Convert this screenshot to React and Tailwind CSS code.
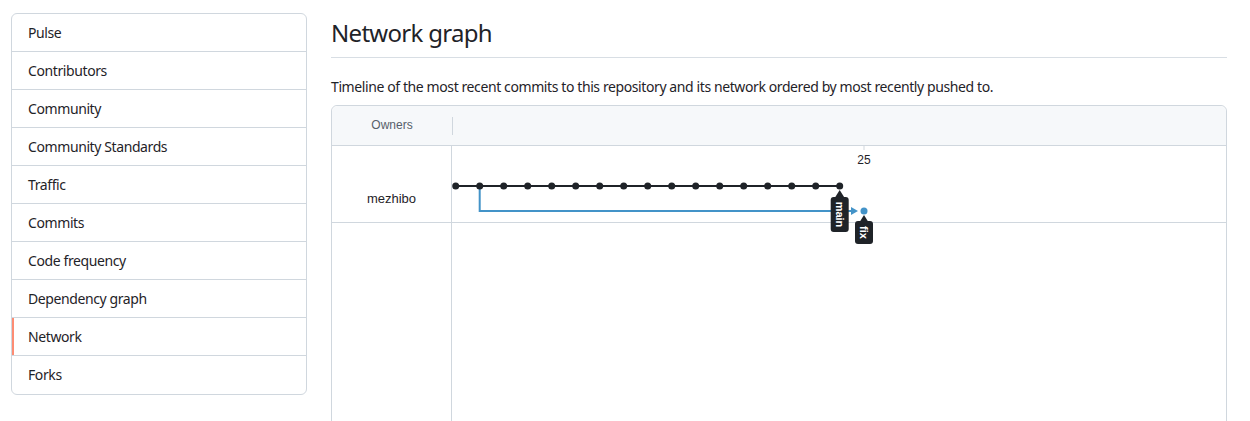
import React from 'react';

const menu = [
  'Pulse',
  'Contributors',
  'Community',
  'Community Standards',
  'Traffic',
  'Commits',
  'Code frequency',
  'Dependency graph',
  'Network',
  'Forks',
];

const font = { fontFamily: '"Noto Sans", "Liberation Sans", sans-serif' };
const canvasFont = { fontFamily: '"Liberation Sans", Arial, sans-serif' };

// the timeline drawing, coordinates relative to the graph cell
const Graph = () => {
  const dots = Array.from({ length: 17 }, (_, i) => 3.7 + i * 24);
  const last = dots[dots.length - 1];
  return (
    <svg className="absolute left-0 top-0 overflow-visible" width="400" height="120" style={canvasFont}>
      <line x1="412" y1="-1" x2="412" y2="4" stroke="#d0d7de" />
      <text x="412" y="18" fontSize="12" textAnchor="middle" fill="#1f2328">25</text>

      <path d="M27.7 40 V65 H404" fill="none" stroke="#4393c8" strokeWidth="2" />
      <path d="M399 61 L406 65 L399 69 Z" fill="#4393c8" />
      <circle cx="412" cy="65" r="3.5" fill="#4393c8" />

      <line x1={dots[0]} y1="40" x2={last} y2="40" stroke="#1f2328" strokeWidth="2" />
      {dots.map((x) => (
        <circle key={x} cx={x} cy="40" r="3.5" fill="#1f2328" />
      ))}

      <g>
        <path d={`M${last - 5} 52 L${last} 44 L${last + 5} 52 Z`} fill="#1f2328" />
        <rect x={last - 9} y="51" width="18" height="35" rx="3" fill="#1f2328" />
        <text
          x={last}
          y="68.5"
          fontSize="11"
          fontWeight="bold"
          fill="#fff"
          textAnchor="middle"
          dominantBaseline="central"
          transform={`rotate(90 ${last} 68.5)`}
        >
          main
        </text>
      </g>
      <g>
        <path d="M407 77 L412 69 L417 77 Z" fill="#1f2328" />
        <rect x="403" y="75" width="18" height="23" rx="3" fill="#1f2328" />
        <text
          x="412"
          y="86.5"
          fontSize="11"
          fontWeight="bold"
          fill="#fff"
          textAnchor="middle"
          dominantBaseline="central"
          transform="rotate(90 412 86.5)"
        >
          fix
        </text>
      </g>
    </svg>
  );
};

export default function App() {
  return (
    <div className="flex gap-6 pl-[11px] pt-[13px] bg-white text-[#1f2328] min-h-[421px]" style={font}>
      {/* side nav */}
      <nav className="w-[296px] shrink-0 self-start border border-[#d0d7de] rounded-md overflow-hidden">
        {menu.map((item, i) => (
          <div
            key={item}
            className={
              'relative h-[38px] flex items-center pl-4 text-sm tracking-[-0.4px] ' +
              (i < menu.length - 1 ? 'border-b border-[#d0d7de]' : '')
            }
          >
            {item === 'Network' && <span className="absolute left-0 top-0 bottom-0 w-[2px] bg-[#fd8c73]" />}
            {item}
          </div>
        ))}
      </nav>

      {/* main */}
      <main className="w-[896px] shrink-0">
        <h2 className="text-2xl font-normal leading-[30px] pt-[5px] pb-[9px] border-b border-[#d8dee4] tracking-[-0.7px]">
          Network graph
        </h2>
        <p className="text-sm mt-[19px] mb-[8px] leading-5 tracking-[-0.4px]">
          Timeline of the most recent commits to this repository and its network ordered by most recently pushed to.
        </p>

        <div className="border border-[#d0d7de] rounded-t-md h-[330px] flex flex-col">
          <div className="h-[40px] bg-[#f6f8fa] border-b border-[#d0d7de] flex items-center rounded-t-md" style={canvasFont}>
            <div className="w-[120px] text-center text-xs text-[#57606a] pb-[1px]">Owners</div>
            <div className="w-px h-[18px] bg-[#d0d7de]" />
          </div>

          <div className="flex h-[77px] border-b border-[#d0d7de]">
            <div
              className="w-[120px] border-r border-[#d0d7de] flex items-center justify-center pt-[29px] text-[13px]"
              style={canvasFont}
            >
              mezhibo
            </div>
            <div className="relative flex-1">
              <Graph />
            </div>
          </div>
          <div className="flex-1 flex">
            <div className="w-[120px] border-r border-[#d0d7de]" />
          </div>
        </div>
      </main>
    </div>
  );
}
